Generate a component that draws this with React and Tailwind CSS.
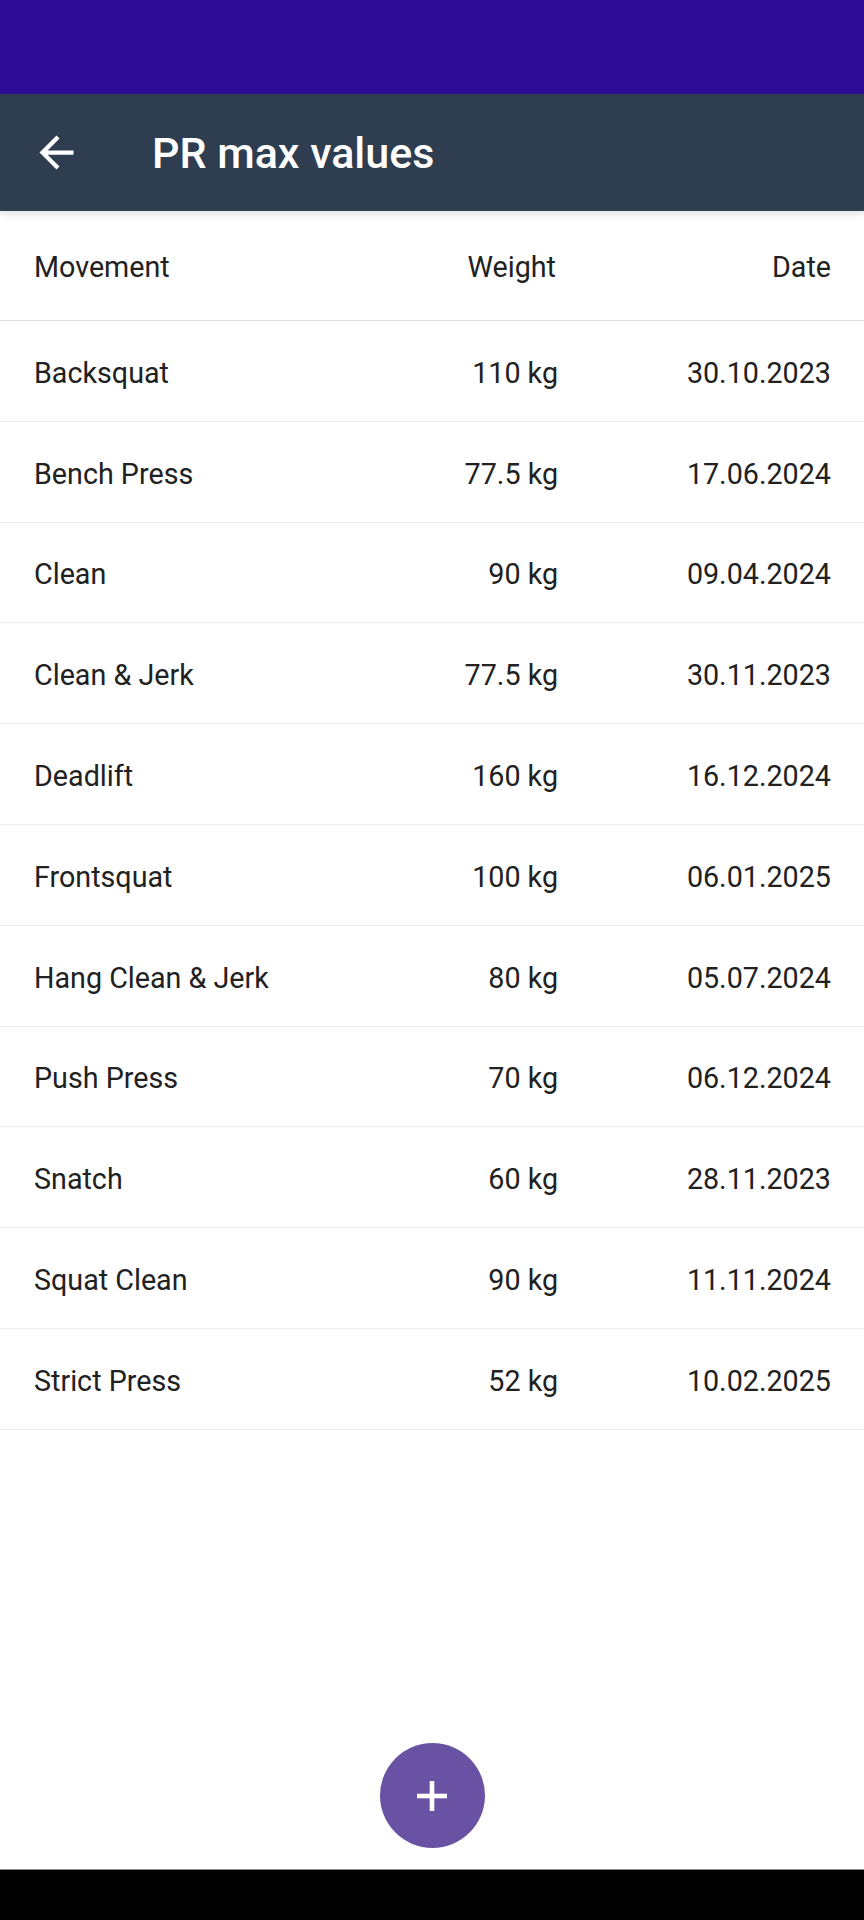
const ROWS = [
  ['Backsquat', '110 kg', '30.10.2023'],
  ['Bench Press', '77.5 kg', '17.06.2024'],
  ['Clean', '90 kg', '09.04.2024'],
  ['Clean & Jerk', '77.5 kg', '30.11.2023'],
  ['Deadlift', '160 kg', '16.12.2024'],
  ['Frontsquat', '100 kg', '06.01.2025'],
  ['Hang Clean & Jerk', '80 kg', '05.07.2024'],
  ['Push Press', '70 kg', '06.12.2024'],
  ['Snatch', '60 kg', '28.11.2023'],
  ['Squat Clean', '90 kg', '11.11.2024'],
  ['Strict Press', '52 kg', '10.02.2025'],
];

function Row({ movement, weight, date, header }) {
  return (
    <div
      className={
        'flex items-center pl-[34px] pr-[33px] pt-[5px] border-b ' +
        (header ? 'h-[110px] border-[#e0e0e0]' : 'h-[100.8px] border-[#eeeeee]')
      }
    >
      <div className="flex-1">{movement}</div>
      <div className={'text-right ' + (header ? 'w-[200px] pr-[2px]' : 'w-[200px]')}>{weight}</div>
      <div className="w-[273px] text-right">{date}</div>
    </div>
  );
}

export default function App() {
  return (
    <div
      className="relative w-[864px] h-[1920px] bg-white flex flex-col overflow-hidden"
      style={{ fontFamily: 'Roboto, "Liberation Sans", sans-serif' }}
    >
      <div className="h-[94px] bg-[#2d0c97]" />
      <div className="h-[117px] bg-[#2e3e50] flex items-center relative z-10 shadow-[0_3px_8px_rgba(0,0,0,0.12)]">
        <svg viewBox="0 0 24 24" className="w-[51px] h-[51px] ml-[31px]" fill="#ffffff">
          <path d="M20 11H7.83l5.59-5.59L12 4l-8 8 8 8 1.41-1.41L7.83 13H20v-2z" />
        </svg>
        <h1 className="ml-[70px] text-white text-[43px] font-medium leading-none pt-[2px]">
          PR max values
        </h1>
      </div>
      <div className="text-[28.7px] text-[#212121]">
        <Row header movement="Movement" weight="Weight" date="Date" />
        {ROWS.map(([m, w, d]) => (
          <Row key={m} movement={m} weight={w} date={d} />
        ))}
      </div>
      <div className="flex-1" />
      <div className="flex justify-center pb-[21px]">
        <button className="w-[105px] h-[105px] rounded-full bg-[#6951a4] flex items-center justify-center">
          <svg viewBox="0 0 30 30" className="w-[30px] h-[30px]">
            <rect x="12.7" y="0" width="4.6" height="30" fill="#fff" />
            <rect x="0" y="12.7" width="30" height="4.6" fill="#fff" />
          </svg>
        </button>
      </div>
      <div className="h-[51px] bg-black border-t border-[#8a8a8a]" />
    </div>
  );
}
